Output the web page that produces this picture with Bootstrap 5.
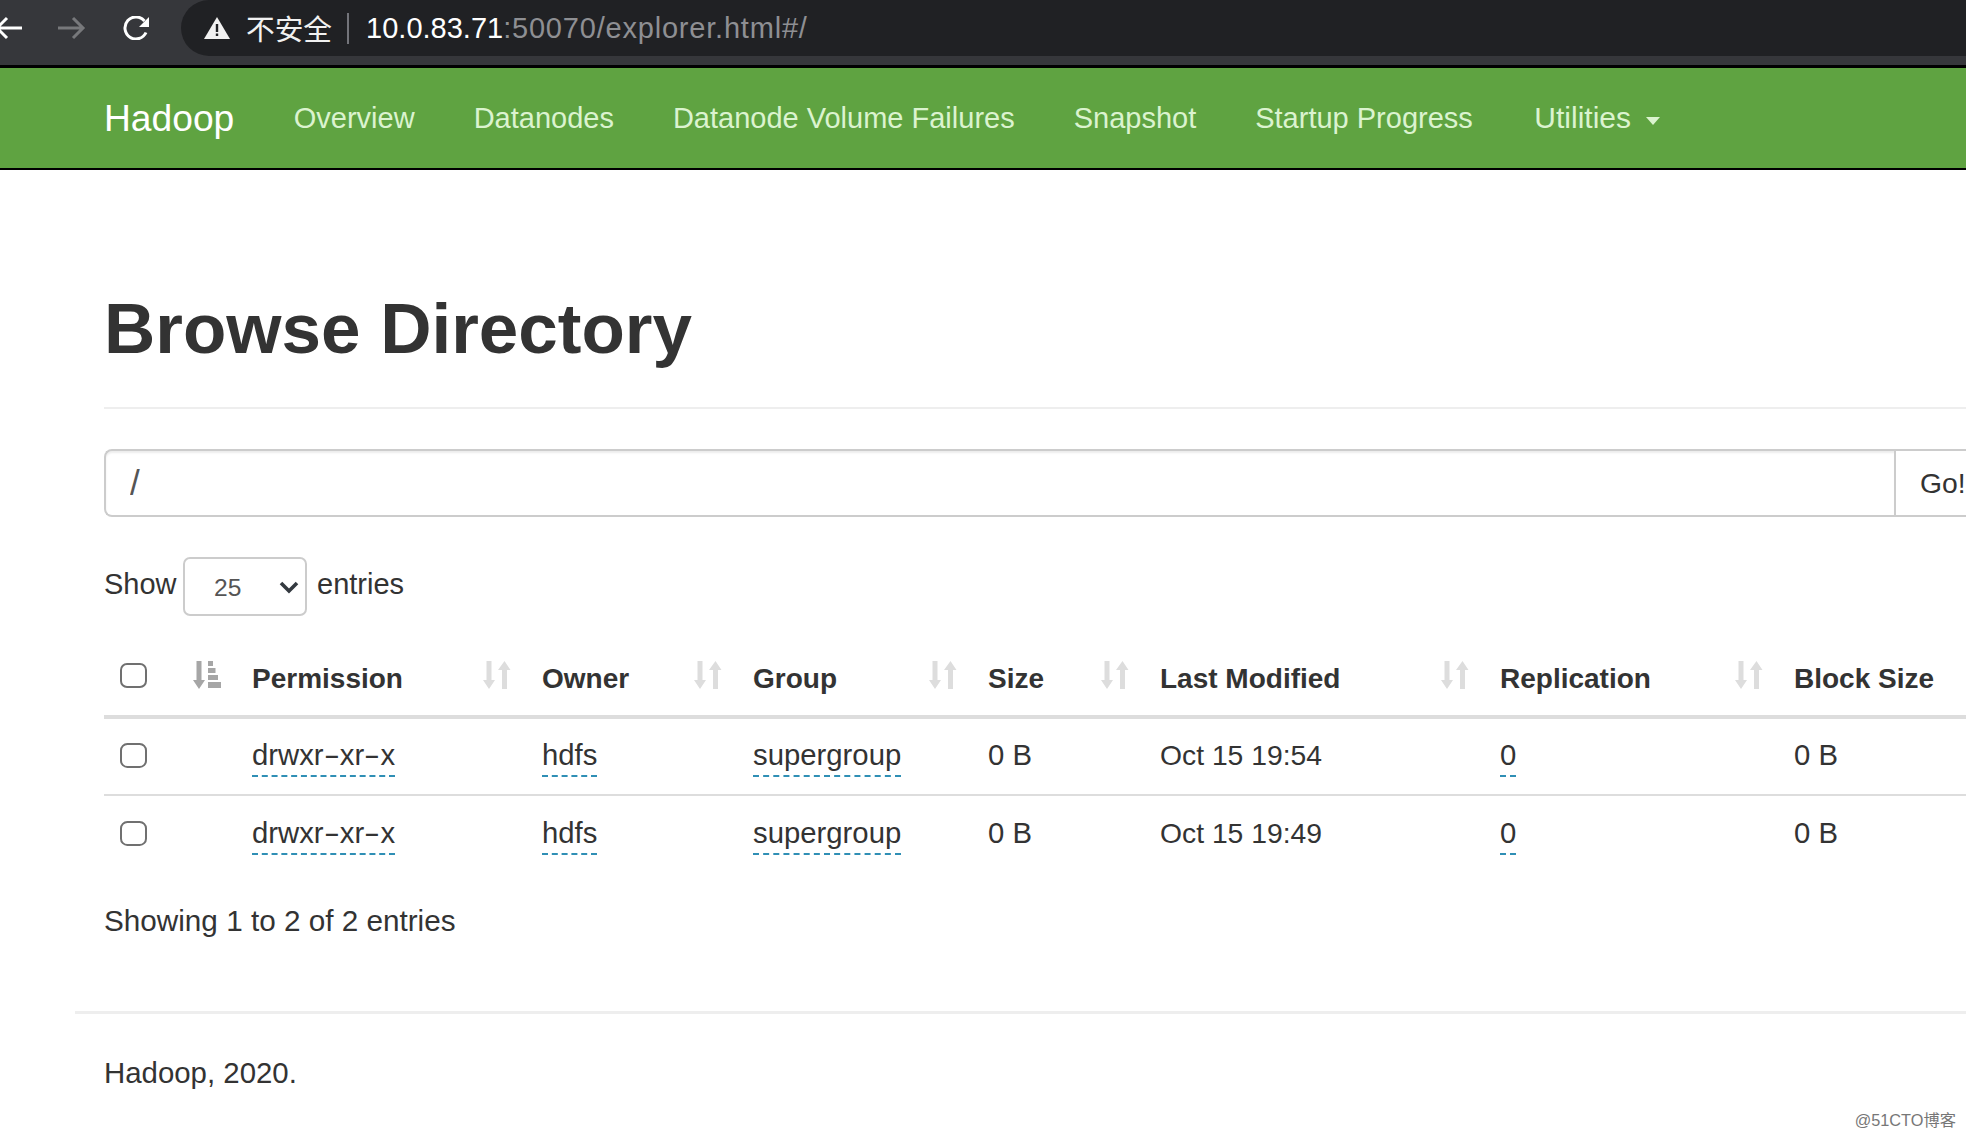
<!DOCTYPE html>
<html lang="en">
<head>
<meta charset="utf-8">
<title>Browsing HDFS</title>
<link href="https://cdn.jsdelivr.net/npm/bootstrap@5.3.0/dist/css/bootstrap.min.css" rel="stylesheet">
<style>
html,body{height:100%;overflow:hidden;}
body{position:relative;background:#fff;color:#333;font-family:"Liberation Sans",Arial,sans-serif;font-size:29.3px;line-height:40px;}
.chrome-bar{height:68px;background:#36373b;border-bottom:3px solid #000;}
.chrome-btn{color:#fff;flex:none;}
.chrome-btn.dim{color:#77787b;}
.chrome-arrow{width:28px;height:24px;}
.back-slot{margin-left:-6px;}
.fwd-slot{margin-left:36px;}
.reload-slot{margin-left:36px;width:28px;height:24px;}
.addr-pill{margin-left:31px;height:56px;flex:1;background:#202124;border-radius:28px 0 0 28px;padding-left:23px;font-size:29px;white-space:nowrap;color:#fff;}
.warn{width:26px;height:22px;margin-right:16px;flex:none;}
.cjk{font-family:"Noto Sans CJK SC","Liberation Sans",sans-serif;font-size:28.7px;line-height:1;color:#f1f1f1;}
.addr-sep{width:2px;height:31px;background:#73747a;margin:0 17px 0 15px;}
.addr-host{color:#fff;}
.addr-rest{color:#8e8f93;letter-spacing:.8px;}
.hd-nav{background:#5fa341;height:102px;border-bottom:2px solid #000;padding:0;flex-wrap:nowrap;}
.hd-nav .container-fluid{padding:0 0 0 104px;flex-wrap:nowrap;justify-content:flex-start;}
.hd-nav .navbar-brand{color:#fff;font-size:37.2px;padding:0;margin:0 30px 0 0;line-height:50px;}
.hd-nav .navbar-nav .nav-link{color:#dbf3cf;padding:0 29.5px;font-size:29px;line-height:40px;white-space:nowrap;}
.hd-nav .navbar-nav .dropdown-toggle{font-size:30px;padding-left:32px;}
.hd-nav .dropdown-toggle::after{margin-left:15px;border-top-width:8px;border-left-width:7.5px;border-right-width:7.5px;vertical-align:3px;}
.page-wrap{margin-left:75px;padding-left:29px;width:2500px;}
.page-title{font-size:71px;line-height:80px;font-weight:700;color:#333;margin:119px 0 0;padding-bottom:38px;border-bottom:2px solid #eee;}
.path-group{margin-top:40px;height:68px;}
.path-group .form-control{font-size:35px;height:68px;padding:0 0 0 24px;border:2.5px solid #ccc;border-right-width:0;border-radius:8px 0 0 8px;color:#555;flex:none;width:1791px;box-shadow:inset 0 2px 2px rgba(0,0,0,.075);}
.path-group .go-btn{font-size:28.3px;border:2.5px solid #ccc;border-left-width:2px;border-radius:0;color:#333;background:#fff;padding:0 24px;width:140px;text-align:left;}
.len-row{margin-top:40px;height:59px;font-size:29px;}
.len-label{padding-bottom:6px;}
.len-select{width:124px;height:59px;margin:0 10px 0 6.500px;padding:4px 0 0 29px;font-size:24.6px;color:#555;border:2px solid #ccc;border-radius:7px;background-image:url("data:image/svg+xml,%3csvg xmlns='http://www.w3.org/2000/svg' viewBox='0 0 20 14'%3e%3cpath fill='none' stroke='%23343a40' stroke-width='3.600' d='M2 3l8 8 8-8'/%3e%3c/svg%3e");background-size:20px 14px;background-position:right 6px center;}
.dir-table{table-layout:fixed;width:2300px;margin:25px 0 0;--bs-table-color:#333;--bs-table-border-color:#ddd;}
.dir-table>thead>tr>th{height:76px;padding:0 16px 16px;vertical-align:bottom;border-bottom:4px solid #ddd;font-size:28px;font-weight:700;line-height:40px;}
.dir-table>tbody>tr>td{height:78px;padding:0 16px 3px;vertical-align:middle;border-bottom:2px solid #ddd;border-top:0;}
.dir-table>tbody>tr:last-child>td{border-bottom:0;}
.c-a{width:132px}.c-b{width:290px}.c-c{width:211px}.c-d{width:235px}.c-e{width:172px}.c-f{width:340px}.c-g{width:294px}.c-h{width:626px}
.dir-table .first-cell{padding-right:15px;}
.hd-flex{display:flex;align-items:center;justify-content:space-between;min-height:40px;}
.hd-flex svg{flex:none;width:28px;height:28px;margin-top:-8px;}
.dir-check{width:27px;height:25px;margin:0;border:2px solid #707070;border-radius:6px;flex:none;display:block;}
.hd-flex .dir-check{margin-top:-8px;}
.tip-link{color:#333;text-decoration:none;border-bottom:2px dashed #2f8fb5;padding-bottom:4px;}
.tip-link:hover{color:#333;}
.wide-dash{display:inline-block;transform:scaleX(1.67);margin:0 .11em;}
.date-text{font-size:28.3px;}
.info-row{margin-top:28px;font-size:29.7px;}
.foot-rule{height:3px;background:#eee;margin:70px 0 0 -29px;}
.foot-text{margin-top:39px;font-size:29.400px;}
.wm{position:absolute;right:10px;bottom:8px;font-size:16.300px;line-height:20px;color:#777;font-family:"Liberation Sans","Noto Sans CJK SC",sans-serif;}
</style>
</head>
<body>
<svg width="0" height="0" class="d-none-svg" style="position:absolute">
<symbol id="i-sort" viewBox="0 0 28 28"><g fill="#ddd"><path d="M3.5 0h5v19h3.5l-6 9-6-9h3.500z"/><path d="M21.500 0l6 9h-3.500v19h-5V9H15z"/></g></symbol>
<symbol id="i-sorted" viewBox="0 0 28 28"><g fill="#a6a6a6"><path d="M3.500 0h5v19h3.500l-6 9-6-9h3.500z"/><path d="M15 0h5v5h-5zM15 7h7.500v5H15zM15 14h10v5H15zM15 21h13v6H15z"/></g></symbol>
</svg>

<div class="chrome-bar d-flex align-items-start">
  <div class="d-flex align-items-center" style="height:56px">
    <svg class="chrome-btn chrome-arrow back-slot" viewBox="0 0 28 24" fill="none" stroke="currentColor" stroke-width="3"><path d="M28 12H3M13 2L3 12l10 10"/></svg>
    <svg class="chrome-btn dim chrome-arrow fwd-slot" viewBox="0 0 28 24" fill="none" stroke="currentColor" stroke-width="3"><path d="M0 12h25M15 2l10 10-10 10"/></svg>
    <svg class="chrome-btn reload-slot" viewBox="0 0 28 24" fill="none" stroke="currentColor" stroke-width="3"><path d="M24 16.500A11 11 0 1 1 22.500 5"/><path d="M27 1v10H17z" fill="currentColor" stroke="none"/></svg>
  </div>
  <div class="addr-pill d-flex align-items-center">
    <svg class="warn" viewBox="0 0 26 22"><path d="M13 0l13 22H0z" fill="#f1f1f1"/><path d="M11.800 7h2.400v8h-2.400zM11.800 16.500h2.400v2.500h-2.400z" fill="#202124"/></svg>
    <span class="cjk">不安全</span><span class="addr-sep"></span><span><span class="addr-host">10.0.83.71</span><span class="addr-rest">:50070/explorer.html#/</span></span>
  </div>
</div>

<nav class="navbar navbar-expand hd-nav">
  <div class="container-fluid">
    <a class="navbar-brand" href="#">Hadoop</a>
    <ul class="navbar-nav">
      <li class="nav-item"><a class="nav-link" href="#">Overview</a></li>
      <li class="nav-item"><a class="nav-link" href="#">Datanodes</a></li>
      <li class="nav-item"><a class="nav-link" href="#">Datanode Volume Failures</a></li>
      <li class="nav-item"><a class="nav-link" href="#">Snapshot</a></li>
      <li class="nav-item"><a class="nav-link" href="#">Startup Progress</a></li>
      <li class="nav-item dropdown"><a class="nav-link dropdown-toggle" href="#">Utilities</a></li>
    </ul>
  </div>
</nav>

<div class="page-wrap">
  <h1 class="page-title">Browse Directory</h1>

  <div class="input-group path-group">
    <input type="text" class="form-control" value="/">
    <button class="btn go-btn" type="button">Go!</button>
  </div>

  <div class="len-row d-flex align-items-center">
    <span class="len-label">Show</span>
    <select class="form-select len-select"><option>25</option></select>
    <span class="len-label">entries</span>
  </div>

  <table class="table dir-table">
    <colgroup><col class="c-a"><col class="c-b"><col class="c-c"><col class="c-d"><col class="c-e"><col class="c-f"><col class="c-g"><col class="c-h"></colgroup>
    <thead>
      <tr>
        <th class="first-cell"><div class="hd-flex"><input class="form-check-input dir-check" type="checkbox"><svg><use href="#i-sorted"/></svg></div></th>
        <th class="first-cell"><div class="hd-flex"><span>Permission</span><svg><use href="#i-sort"/></svg></div></th>
        <th class="first-cell"><div class="hd-flex"><span>Owner</span><svg><use href="#i-sort"/></svg></div></th>
        <th class="first-cell"><div class="hd-flex"><span>Group</span><svg><use href="#i-sort"/></svg></div></th>
        <th class="first-cell"><div class="hd-flex"><span>Size</span><svg><use href="#i-sort"/></svg></div></th>
        <th class="first-cell"><div class="hd-flex"><span>Last Modified</span><svg><use href="#i-sort"/></svg></div></th>
        <th class="first-cell"><div class="hd-flex"><span>Replication</span><svg><use href="#i-sort"/></svg></div></th>
        <th>Block Size</th>
      </tr>
    </thead>
    <tbody>
      <tr>
        <td><input class="form-check-input dir-check" type="checkbox"></td>
        <td><a class="tip-link" href="#">drwxr<span class="wide-dash">-</span>xr<span class="wide-dash">-</span>x</a></td>
        <td><a class="tip-link" href="#">hdfs</a></td>
        <td><a class="tip-link" href="#">supergroup</a></td>
        <td>0 B</td>
        <td class="date-text">Oct 15 19:54</td>
        <td><a class="tip-link" href="#">0</a></td>
        <td>0 B</td>
      </tr>
      <tr>
        <td><input class="form-check-input dir-check" type="checkbox"></td>
        <td><a class="tip-link" href="#">drwxr<span class="wide-dash">-</span>xr<span class="wide-dash">-</span>x</a></td>
        <td><a class="tip-link" href="#">hdfs</a></td>
        <td><a class="tip-link" href="#">supergroup</a></td>
        <td>0 B</td>
        <td class="date-text">Oct 15 19:49</td>
        <td><a class="tip-link" href="#">0</a></td>
        <td>0 B</td>
      </tr>
    </tbody>
  </table>

  <div class="info-row">Showing 1 to 2 of 2 entries</div>
  <div class="foot-rule"></div>
  <div class="foot-text">Hadoop, 2020.</div>
</div>
<div class="wm">@51CTO博客</div>
<script src="https://cdn.jsdelivr.net/npm/bootstrap@5.3.0/dist/js/bootstrap.bundle.min.js"></script>
</body>
</html>
